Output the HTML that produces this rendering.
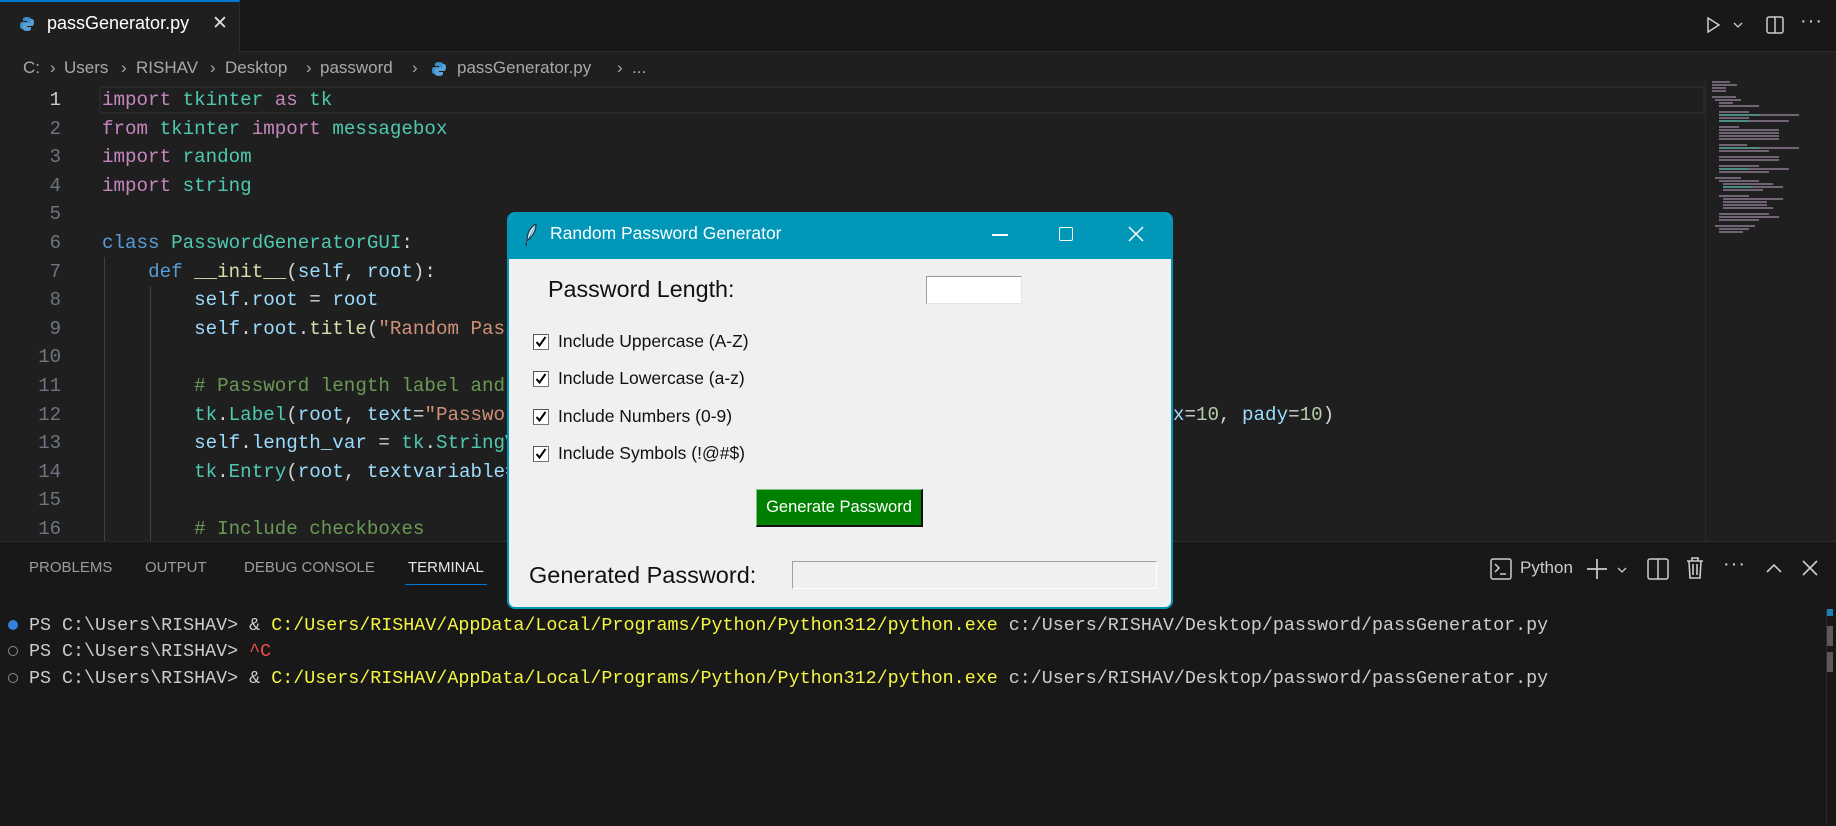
<!DOCTYPE html>
<html><head><meta charset="utf-8"><style>
*{margin:0;padding:0;box-sizing:border-box}
body{width:1836px;height:826px;background:#1f1f1f;overflow:hidden;position:relative;font-family:"Liberation Sans",sans-serif;color:#ccc}
.abs{position:absolute}
.code{position:absolute;left:102px;font-size:19.2px;line-height:28.6px;white-space:pre;font-family:"Liberation Mono",monospace;color:#d4d4d4}
.ln{position:absolute;left:0;width:61px;text-align:right;font-size:19px;line-height:28.6px;font-family:"Liberation Mono",monospace;color:#6e7681}
.k{color:#c586c0}.m{color:#4ec9b0}.d{color:#569cd6}.f{color:#dcdcaa}.v{color:#9cdcfe}.s{color:#ce9178}.c{color:#6a9955}.n{color:#b5cea8}
.tl{position:absolute;font-size:18.35px;line-height:26px;white-space:pre;font-family:"Liberation Mono",monospace;color:#cccccc;left:29px}
.ptab{position:absolute;top:559px;font-size:15px;color:#9d9d9d}
.bc{position:absolute;top:58px;font-size:17px;color:#a9a9a9;white-space:pre}
.cb{position:absolute;left:533px;width:16px;height:16px;background:#fff;border:1px solid #777;border-top-color:#555;border-left-color:#555}
.cb svg{position:absolute;left:1px;top:1px}
.cl{position:absolute;left:558px;font-size:17.5px;color:#111}
</style></head><body>
<div class="abs" style="left:0;top:0;width:1836px;height:52px;background:#181818;border-bottom:1px solid #2b2b2b"></div>
<div class="abs" style="left:0;top:0;width:240px;height:53px;background:#1f1f1f;border-top:2px solid #0078d4;border-right:1px solid #2b2b2b"></div>
<svg class="abs" style="left:19px;top:16px" width="16" height="16" viewBox="0 0 16 16"><path d="M8 1C4 1 4 3 4 3v2h4v1H3S1 6 1 9.5 3 13 3 13h1.5v-2S4.5 9 7 9h3s2 0 2-2V3s0-2-4-2z" fill="#3c8fc9"/><path d="M8 15c4 0 4-2 4-2v-2H8v-1h5s2 0 2-3.5S13 3 13 3h-1.5v2S11.5 7 9 7H6s-2 0-2 2v4s0 2 4 2z" fill="#5aa0d6"/></svg>
<div class="abs" style="left:47px;top:13px;font-size:18px;color:#fff">passGenerator.py</div>
<div class="abs" style="left:212px;top:12px;font-size:19px;color:#ddd">✕</div>
<svg class="abs" style="left:1703px;top:15px" width="20" height="20" viewBox="0 0 20 20"><path d="M5 3l11 7-11 7z" fill="none" stroke="#ccc" stroke-width="1.5"/></svg>
<svg class="abs" style="left:1732px;top:20px" width="12" height="10" viewBox="0 0 12 10"><path d="M2 3l4 4 4-4" fill="none" stroke="#ccc" stroke-width="1.3"/></svg>
<svg class="abs" style="left:1765px;top:15px" width="20" height="20" viewBox="0 0 20 20"><rect x="2" y="2" width="16" height="16" rx="2" fill="none" stroke="#ccc" stroke-width="1.5"/><path d="M10 2v16" stroke="#ccc" stroke-width="1.5"/></svg>
<div class="abs" style="left:1800px;top:10px;font-size:20px;color:#ccc;letter-spacing:1px">···</div>
<!-- breadcrumb -->
<div class="bc" style="left:23px">C:</div><div class="bc" style="left:50px">›</div>
<div class="bc" style="left:64px">Users</div><div class="bc" style="left:121px">›</div>
<div class="bc" style="left:136px">RISHAV</div><div class="bc" style="left:210px">›</div>
<div class="bc" style="left:225px">Desktop</div><div class="bc" style="left:306px">›</div>
<div class="bc" style="left:320px">password</div><div class="bc" style="left:412px">›</div>
<svg class="abs" style="left:431px;top:61px" width="16" height="16" viewBox="0 0 16 16"><path d="M8 1C4 1 4 3 4 3v2h4v1H3S1 6 1 9.5 3 13 3 13h1.5v-2S4.5 9 7 9h3s2 0 2-2V3s0-2-4-2z" fill="#3c8fc9"/><path d="M8 15c4 0 4-2 4-2v-2H8v-1h5s2 0 2-3.5S13 3 13 3h-1.5v2S11.5 7 9 7H6s-2 0-2 2v4s0 2 4 2z" fill="#5aa0d6"/></svg>
<div class="bc" style="left:457px">passGenerator.py</div><div class="bc" style="left:617px">›</div>
<div class="bc" style="left:632px">...</div>
<div class="abs" style="left:99px;top:86px;width:1606px;height:28px;border:2px solid #282828"></div>
<div class="abs" style="left:104px;top:257px;width:1px;height:284px;background:#404040"></div>
<div class="abs" style="left:150px;top:286px;width:1px;height:255px;background:#404040"></div>
<div class="ln" style="top:86px;color:#ccc">1</div>
<div class="ln" style="top:114.6px">2</div><div class="ln" style="top:143.2px">3</div><div class="ln" style="top:171.8px">4</div><div class="ln" style="top:200.4px">5</div><div class="ln" style="top:229px">6</div><div class="ln" style="top:257.6px">7</div><div class="ln" style="top:286.2px">8</div><div class="ln" style="top:314.8px">9</div><div class="ln" style="top:343.4px">10</div><div class="ln" style="top:372px">11</div><div class="ln" style="top:400.6px">12</div><div class="ln" style="top:429.2px">13</div><div class="ln" style="top:457.8px">14</div><div class="ln" style="top:486.4px">15</div><div class="ln" style="top:515px">16</div>
<div class="code" style="top:86px"><span class="k">import</span> <span class="m">tkinter</span> <span class="k">as</span> <span class="m">tk</span>
<span class="k">from</span> <span class="m">tkinter</span> <span class="k">import</span> <span class="m">messagebox</span>
<span class="k">import</span> <span class="m">random</span>
<span class="k">import</span> <span class="m">string</span>

<span class="d">class</span> <span class="m">PasswordGeneratorGUI</span>:
    <span class="d">def</span> <span class="f">__init__</span>(<span class="v">self</span>, <span class="v">root</span>):
        <span class="v">self</span>.<span class="v">root</span> = <span class="v">root</span>
        <span class="v">self</span>.<span class="v">root</span>.<span class="f">title</span>(<span class="s">"Random Password Generator"</span>)

        <span class="c"># Password length label and entry</span>
        <span class="m">tk</span>.<span class="m">Label</span>(<span class="v">root</span>, <span class="v">text</span>=<span class="s">"Password Length:"</span>, <span class="v">font</span>=(<span class="s">"Arial"</span>, <span class="n">12</span>)).<span class="f">grid</span>(<span class="v">row</span>=<span class="n">0</span>, <span class="v">column</span>=<span class="n">0</span>, <span class="v">padx</span>=<span class="n">10</span>, <span class="v">pady</span>=<span class="n">10</span>)
        <span class="v">self</span>.<span class="v">length_var</span> = <span class="m">tk</span>.<span class="m">StringVar</span>()
        <span class="m">tk</span>.<span class="m">Entry</span>(<span class="v">root</span>, <span class="v">textvariable</span>=<span class="v">self</span>.<span class="v">length_var</span>, <span class="v">width</span>=<span class="n">10</span>).<span class="f">grid</span>(<span class="v">row</span>=<span class="n">0</span>, <span class="v">column</span>=<span class="n">1</span>, <span class="v">pady</span>=<span class="n">10</span>)

        <span class="c"># Include checkboxes</span></div>
<div class="abs" style="left:1705px;top:80px;width:1px;height:461px;background:#2b2b2b"></div>
<svg class="abs" style="left:1710px;top:80px" width="90" height="160" viewBox="0 0 90 160">
<g stroke-width="1.4">
<path d="M2 2h18M2 5h25M2 8h14M2 11h14M2 17h24M5 20h26M9 23h14M9 26h40M9 32h30M9 35h80M9 38h30M9 41h70M9 47h20M9 50h60M9 53h60M9 56h60M9 59h60M9 65h28M9 68h80M9 71h50M9 77h60M9 80h60M9 86h40M9 89h70M9 92h50M5 98h26M9 101h40M13 104h50M13 107h60M13 110h40M9 116h30M13 119h60M13 122h44M13 125h44M13 128h50M9 134h50M9 137h60M9 140h40M5 146h40M9 149h30M9 152h24" stroke="#8a7a90"/>
<path d="M9 35h40M9 41h30M9 68h40M9 89h30M13 107h30" stroke="#4ea090"/>
</g></svg>
<div class="abs" style="left:0;top:541px;width:1836px;height:285px;background:#181818;border-top:1px solid #2b2b2b"></div>
<div class="ptab" style="left:29px">PROBLEMS</div>
<div class="ptab" style="left:145px">OUTPUT</div>
<div class="ptab" style="left:244px">DEBUG CONSOLE</div>
<div class="ptab" style="left:408px;color:#e7e7e7">TERMINAL</div>
<div class="abs" style="left:405px;top:584px;width:82px;height:1px;background:#0078d4"></div>
<svg class="abs" style="left:1490px;top:558px" width="22" height="22" viewBox="0 0 22 22"><rect x="1" y="1" width="20" height="20" rx="2" fill="none" stroke="#ccc" stroke-width="1.5"/><path d="M5 6l4 4-4 4M10 16h6" fill="none" stroke="#ccc" stroke-width="1.5"/></svg>
<div class="abs" style="left:1520px;top:558px;font-size:17px;color:#ccc">Python</div>
<svg class="abs" style="left:1586px;top:558px" width="22" height="22" viewBox="0 0 22 22"><path d="M11 1v20M1 11h20" stroke="#ccc" stroke-width="1.7"/></svg>
<svg class="abs" style="left:1616px;top:565px" width="12" height="10" viewBox="0 0 12 10"><path d="M2 3l4 4 4-4" fill="none" stroke="#ccc" stroke-width="1.3"/></svg>
<svg class="abs" style="left:1647px;top:558px" width="22" height="22" viewBox="0 0 22 22"><rect x="1" y="1" width="20" height="20" rx="2" fill="none" stroke="#ccc" stroke-width="1.5"/><path d="M11 1v20" stroke="#ccc" stroke-width="1.5"/></svg>
<svg class="abs" style="left:1686px;top:557px" width="18" height="22" viewBox="0 0 18 22"><path d="M1 4h16M6 4V1h6v3M3 4l1 17h10l1-17M7 7v11M11 7v11" fill="none" stroke="#ccc" stroke-width="1.6"/></svg>
<div class="abs" style="left:1723px;top:553px;font-size:20px;color:#ccc;letter-spacing:1px">···</div>
<svg class="abs" style="left:1765px;top:562px" width="18" height="12" viewBox="0 0 18 12"><path d="M2 10l7-7 7 7" fill="none" stroke="#ccc" stroke-width="1.6"/></svg>
<svg class="abs" style="left:1802px;top:560px" width="16" height="16" viewBox="0 0 16 16"><path d="M1 1l14 14M15 1L1 15" stroke="#ccc" stroke-width="1.6"/></svg>
<div class="abs" style="left:8px;top:620px;width:10px;height:10px;border-radius:50%;background:#3794ff;opacity:.85"></div>
<div class="abs" style="left:8px;top:646px;width:10px;height:10px;border-radius:50%;border:1.5px solid #8b8b8b"></div>
<div class="abs" style="left:8px;top:673px;width:10px;height:10px;border-radius:50%;border:1.5px solid #8b8b8b"></div>
<div class="tl" style="top:613px">PS C:\Users\RISHAV&gt; &amp; <span style="color:#f5f543">C:/Users/RISHAV/AppData/Local/Programs/Python/Python312/python.exe</span> c:/Users/RISHAV/Desktop/password/passGenerator.py</div>
<div class="tl" style="top:639px">PS C:\Users\RISHAV&gt; <span style="color:#f14c4c">^C</span></div>
<div class="tl" style="top:666px">PS C:\Users\RISHAV&gt; &amp; <span style="color:#f5f543">C:/Users/RISHAV/AppData/Local/Programs/Python/Python312/python.exe</span> c:/Users/RISHAV/Desktop/password/passGenerator.py</div>
<div class="abs" style="left:1826px;top:610px;width:1px;height:216px;background:#2b2b2b"></div>
<div class="abs" style="left:1827px;top:609px;width:6px;height:7px;background:#1b80b2"></div>
<div class="abs" style="left:1827px;top:626px;width:6px;height:20px;background:#5a5a5a"></div>
<div class="abs" style="left:1827px;top:652px;width:6px;height:20px;background:#5a5a5a"></div>
<div class="abs" style="left:507px;top:212px;width:666px;height:397px;background:#f0f0f0;border:2px solid #0097b9;border-radius:8px;overflow:hidden">
  <div class="abs" style="left:0;top:0;width:662px;height:45px;background:#0097b9"></div>
</div>
<svg class="abs" style="left:524px;top:223px" width="14" height="24" viewBox="0 0 14 24"><path d="M12 1C5 5 3 12 3 18l-1 5M12 1c0 7-4 13-9 17" fill="#cfe4f5" stroke="#234" stroke-width="1.2"/></svg>
<div class="abs" style="left:550px;top:223px;font-size:17.5px;color:#fff">Random Password Generator</div>
<div class="abs" style="left:992px;top:234px;width:16px;height:1.5px;background:#fff"></div>
<div class="abs" style="left:1059px;top:227px;width:14px;height:14px;border:1.5px solid #fff;border-radius:2px"></div>
<svg class="abs" style="left:1128px;top:226px" width="16" height="16" viewBox="0 0 16 16"><path d="M1 1l14 14M15 1L1 15" stroke="#fff" stroke-width="1.5"/></svg>
<div class="abs" style="left:548px;top:276px;font-size:23.3px;color:#111">Password Length:</div>
<div class="abs" style="left:926px;top:276px;width:96px;height:28px;background:#fff;border:1px solid #999;border-right-color:#e3e3e3;border-bottom-color:#e3e3e3"></div>
<div class="cb" style="top:334px"><svg width="12" height="12" viewBox="0 0 12 12"><path d="M1.5 6l3 3.5L10.5 1" fill="none" stroke="#000" stroke-width="2"/></svg></div>
<div class="cl" style="top:331px">Include Uppercase (A-Z)</div>
<div class="cb" style="top:371px"><svg width="12" height="12" viewBox="0 0 12 12"><path d="M1.5 6l3 3.5L10.5 1" fill="none" stroke="#000" stroke-width="2"/></svg></div>
<div class="cl" style="top:368px">Include Lowercase (a-z)</div>
<div class="cb" style="top:409px"><svg width="12" height="12" viewBox="0 0 12 12"><path d="M1.5 6l3 3.5L10.5 1" fill="none" stroke="#000" stroke-width="2"/></svg></div>
<div class="cl" style="top:406px">Include Numbers (0-9)</div>
<div class="cb" style="top:446px"><svg width="12" height="12" viewBox="0 0 12 12"><path d="M1.5 6l3 3.5L10.5 1" fill="none" stroke="#000" stroke-width="2"/></svg></div>
<div class="cl" style="top:443px">Include Symbols (!@#$)</div>
<div class="abs" style="left:756px;top:489px;width:167px;height:38px;background:#008000;border:1px solid #7fbf7f;border-right:2px solid #111;border-bottom:2px solid #111;color:#fff;font-size:16.5px;text-align:center;line-height:34px">Generate Password</div>
<div class="abs" style="left:529px;top:562px;font-size:23.5px;color:#111">Generated Password:</div>
<div class="abs" style="left:792px;top:561px;width:365px;height:28px;background:#f0f0f0;border:1px solid #a0a0a0;border-right-color:#fff;border-bottom-color:#fff"></div>
</body></html>
